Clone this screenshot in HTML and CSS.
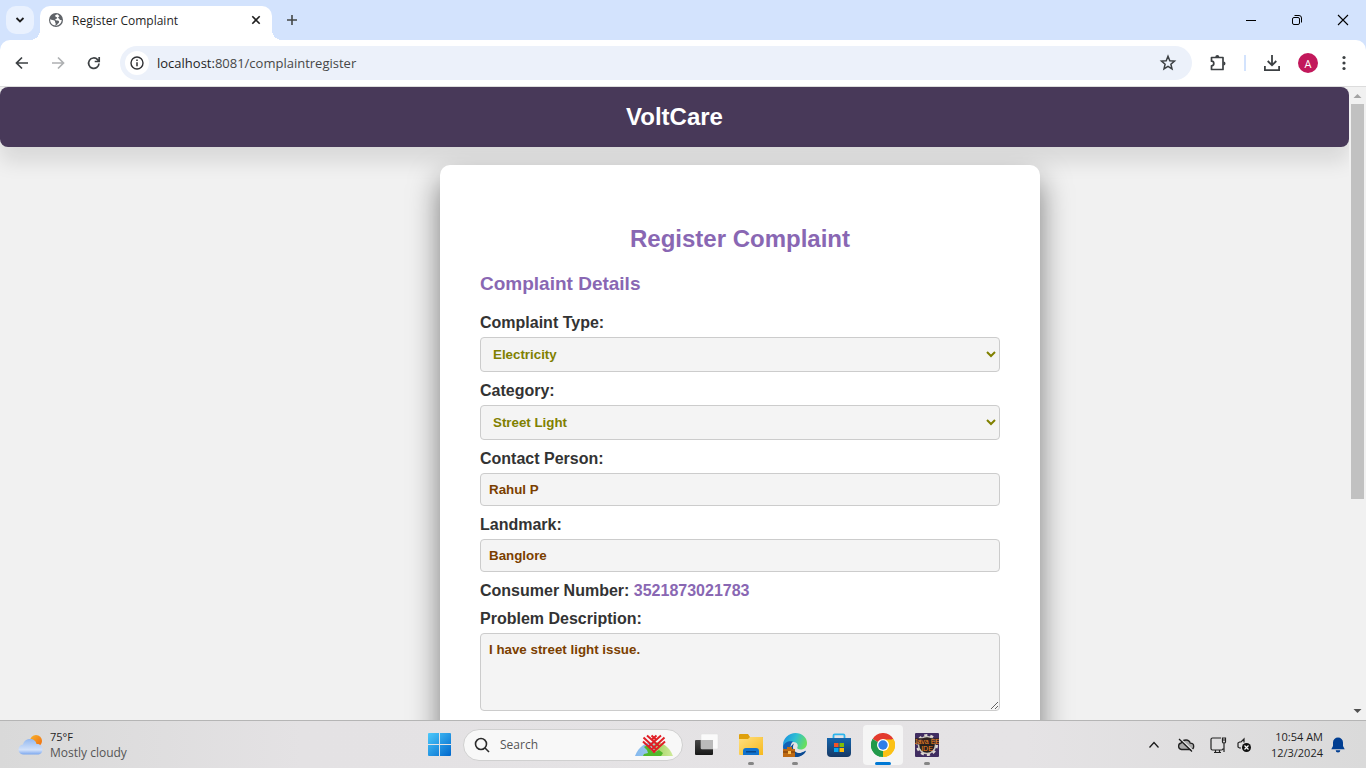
FILE: index.html
```
<!DOCTYPE html>
<html lang="en">
<head>
<meta charset="utf-8">
<title>Register Complaint</title>
<link rel="stylesheet" href="styles.css">
</head>
<body>
<div class="titlebar">
  <button class="tab-search" aria-label="Search tabs"><svg width="12" height="12" viewBox="0 0 12 12"><path d="M2.500 4 6 7.500 9.500 4" fill="none" stroke="#1f1f1f" stroke-width="1.800"/></svg></button>
  <div class="tab">
    <svg class="tab-globe" width="16" height="16" viewBox="0 0 16 16"><circle cx="8" cy="8" r="7" fill="#5f6368"/><path d="M9.500 2.300C7 2.600 6.800 4 7.600 4.700s1.700.3 1.600 1.300-1.700.7-1.900 1.600.9 1 2.300 1 1.700 1 1.400 2-1.500 1-1.900 2.100l-1.400 1C9.500 14 13.600 12 13.700 8c-1.200.3-2-.2-2.300-1s-1.400-.4-1.300-1.400 1.300-.8 1.200-1.700z" fill="#fff"/><path d="M2.200 7.200c1.600.9 3.100.6 4.200 1.300s.3 1.700 1 2.300-.1 1.500.2 2.600C4.500 13.500 1.900 10.800 2.200 7.200z" fill="#fff"/></svg>
    <span class="tab-title">Register Complaint</span>
    <button class="tab-close" aria-label="Close tab"><svg width="10" height="10" viewBox="0 0 10 10"><path d="M1.300 1.300 8.700 8.700M8.700 1.300 1.300 8.700" stroke="#1f1f1f" stroke-width="1.600"/></svg></button>
  </div>
  <button class="new-tab" aria-label="New tab"><svg width="12" height="12" viewBox="0 0 12 12"><path d="M6 1v10M1 6h10" stroke="#444746" stroke-width="1.600"/></svg></button>
  <div class="window-controls">
    <button aria-label="Minimize"><svg width="12" height="12" viewBox="0 0 12 12"><path d="M1 6.500h10" stroke="#000"/></svg></button>
    <button aria-label="Restore"><svg width="12" height="12" viewBox="0 0 12 12" fill="none" stroke="#000"><rect x="1.500" y="3.500" width="7" height="7" rx="1.500"/><path d="M3.500 1.500H8a2.500 2.500 0 0 1 2.500 2.500v4.500"/></svg></button>
    <button aria-label="Close"><svg width="12" height="12" viewBox="0 0 12 12"><path d="M1 1l10 10M11 1 1 11" stroke="#000" stroke-width="1.100"/></svg></button>
  </div>
</div>
<div class="toolbar-wrap">
<div class="toolbar">
  <div class="nav">
    <button aria-label="Back"><svg width="16" height="16" viewBox="0 0 16 16" fill="none" stroke="#3c4043" stroke-width="1.700"><path d="M14 8H3M8 2.500 2.500 8 8 13.500"/></svg></button>
    <button aria-label="Forward"><svg width="16" height="16" viewBox="0 0 16 16" fill="none" stroke="#aeb0b2" stroke-width="1.700"><path d="M2 8h11M8 2.500 13.500 8 8 13.500"/></svg></button>
    <button aria-label="Reload"><svg width="16" height="16" viewBox="0 0 16 16" fill="none" stroke="#3c4043" stroke-width="1.700"><path d="M13 8.500A5.200 5.200 0 1 1 11.600 4.600L13 6M13.200 2v4.500H8.700"/></svg></button>
  </div>
  <div class="omnibox">
    <button class="site-info" aria-label="Site information"><svg width="14" height="14" viewBox="0 0 14 14"><circle cx="7" cy="7" r="6" fill="none" stroke="#303134" stroke-width="1.400"/><path d="M7 6.200v4M7 3.600v1.500" stroke="#303134" stroke-width="1.500"/></svg></button>
    <div class="url" role="textbox" aria-label="Address"><span class="url-host">localhost:</span>8081/complaintregister</div>
    <button class="star" aria-label="Bookmark"><svg width="18" height="18" viewBox="0 0 18 18"><path d="m9 2.300 1.800 4.400 4.700.4-3.600 3.100 1.100 4.600L9 12.300l-4 2.500 1.100-4.600-3.600-3.100 4.700-.4z" fill="none" stroke="#3c4043" stroke-width="1.500"/></svg></button>
  </div>
  <div class="actions">
    <button aria-label="Extensions"><svg width="18" height="18" viewBox="0 0 18 18"><path d="M2.500 3.500H14v12H2.500v-3.700a2.300 2.300 0 0 0 0-4.600z" fill="none" stroke="#3c4043" stroke-width="1.700" stroke-linejoin="round"/><path d="M6.300 3a2 2 0 0 1 4 0zM14.500 7.500a2 2 0 0 1 0 4z" fill="#3c4043"/></svg></button>
    <span class="divider"></span>
    <button aria-label="Downloads"><svg width="18" height="18" viewBox="0 0 18 18" fill="none" stroke="#3c4043" stroke-width="1.800"><path d="M9 1v10M4.700 7 9 11.300 13.300 7M1.900 12v4.100h14.200V12"/></svg></button>
    <button class="avatar" aria-label="Profile">A</button>
    <button class="menu" aria-label="Menu"><svg width="4" height="16" viewBox="0 0 4 16" fill="#3c4043"><circle cx="2" cy="2.500" r="1.600"/><circle cx="2" cy="8" r="1.600"/><circle cx="2" cy="13.500" r="1.600"/></svg></button>
  </div>
</div>
</div>
<div class="viewport">
  <div class="page">
    <header class="site-header"><span class="brand">VoltCare</span></header>
    <main class="main">
      <form class="card">
        <h2>Register Complaint</h2>
        <h3>Complaint Details</h3>
        <label for="type">Complaint Type:</label>
        <select id="type"><option>Electricity</option></select>
        <label for="category">Category:</label>
        <select id="category"><option>Street Light</option></select>
        <label for="contact">Contact Person:</label>
        <input id="contact" type="text" value="Rahul P">
        <label for="landmark">Landmark:</label>
        <input id="landmark" type="text" value="Banglore">
        <p class="consumer">Consumer Number: <span>3521873021783</span></p>
        <label for="problem">Problem Description:</label>
        <textarea id="problem" rows="4" spellcheck="false">I have street light issue.</textarea>
      </form>
    </main>
  </div>
  <div class="scrollbar">
    <svg width="17" height="17" viewBox="0 0 17 17"><path d="M4.500 11 8.500 7l4 4z" fill="#a3a3a3"/></svg>
    <div class="track"><div class="thumb"></div></div>
    <svg width="17" height="17" viewBox="0 0 17 17"><path d="m4.500 6 4 4 4-4z" fill="#505050"/></svg>
  </div>
</div>
<div class="taskbar">
  <button class="weather">
    <svg width="26" height="22" viewBox="0 0 26 22"><defs><linearGradient id="sun" x1="0" y1="0" x2="1" y2="1"><stop offset="0" stop-color="#f7b32b"/><stop offset="1" stop-color="#f0690f"/></linearGradient><linearGradient id="cld" x1="0" y1="0" x2="0" y2="1"><stop offset="0" stop-color="#94b9f0"/><stop offset=".7" stop-color="#d3e2fa"/><stop offset="1" stop-color="#7ba7ee"/></linearGradient></defs><circle cx="18" cy="7" r="6" fill="url(#sun)"/><path d="M6 20.500a5 5 0 0 1-1-10C6 6.500 9 5 12 5c3.500 0 6 2 6.500 5 3.500-.5 6 2 6 5.200 0 3.300-2 5.300-5 5.300z" fill="url(#cld)"/></svg>
    <span class="weather-text"><span class="temp">75°F</span><span class="sky">Mostly cloudy</span></span>
  </button>
  <div class="apps">
    <button class="start" aria-label="Start"><svg width="23" height="23" viewBox="0 0 23 23"><defs><linearGradient id="win" x1="0" y1="0" x2="1" y2="1"><stop offset="0" stop-color="#4cc9fb"/><stop offset="1" stop-color="#0067cc"/></linearGradient></defs><path d="M0 1q0-1 1-1h10v11H0zM12 0h10q1 0 1 1v10H12zM0 12h11v11H1q-1 0-1-1zM12 12h11v10q0 1-1 1H12z" fill="url(#win)"/></svg></button>
    <div class="search">
      <svg width="16" height="16" viewBox="0 0 16 16" fill="none" stroke="#2b2b2b" stroke-width="1.600"><circle cx="7" cy="7" r="5.500"/><path d="m11 11 4 4"/></svg>
      <input type="text" placeholder="Search" aria-label="Search">
      <svg width="40" height="24" viewBox="0 0 40 24"><defs><linearGradient id="hill" x1="0" x2="1"><stop offset="0" stop-color="#84b8ef"/><stop offset=".45" stop-color="#9ccbe8"/><stop offset=".6" stop-color="#a7d568"/><stop offset="1" stop-color="#d0eb9b"/></linearGradient></defs><path d="M1 23C5 13 12 9 20 9s15 4 19 14z" fill="url(#hill)"/><path d="M10 14c3-2 5-2 7 0l-1 2 4 4 5-3 4 3-2 3H9l1-2 4-1-1-3z" fill="#50b92d"/><g stroke="#e01f26" stroke-width="2" fill="none"><path d="M9 8.500 21 19.500M9.500 4.500 23 17M13 2.500 26 14M17.500 2.500 22 6.500M31 8.500 19 19.500M30.500 4.500 17 17M27 2.500 14 14M22.500 2.500 18 6.500"/></g></svg>
    </div>
    <button class="app" aria-label="Task view"><svg width="24" height="24" viewBox="0 0 24 24"><defs><linearGradient id="tv" x1="0" y1="0" x2="0" y2="1"><stop offset="0" stop-color="#484848"/><stop offset="1" stop-color="#171717"/></linearGradient></defs><rect x="0" y="7" width="18" height="15" rx="1" fill="url(#tv)"/><rect x="6" y="1" width="17" height="15" rx="1" fill="#fafafa" stroke="#ddd" stroke-width=".5"/><path d="M6 7h12v9H6z" fill="#bababa"/></svg></button>
    <button class="app running" aria-label="File Explorer"><svg width="24" height="24" viewBox="0 0 24 24"><defs><linearGradient id="fold" x1="0" y1="0" x2="1" y2="1"><stop offset="0" stop-color="#ffe080"/><stop offset="1" stop-color="#f7b91e"/></linearGradient></defs><path d="M0 2q0-1 1-1h8l2 3h12q1 0 1 1v7H0z" fill="#dfa00c"/><path d="M0 6h9l2-2h12q1 0 1 1v17H1q-1 0-1-1z" fill="url(#fold)"/><path d="M4 22v-4q0-3 3-3h10q3 0 3 3v4z" fill="#1173ce"/><path d="M7 18h10v1.500H7z" fill="#07498f"/></svg></button>
    <button class="app running" aria-label="Edge"><svg width="24" height="24" viewBox="0 0 24 24"><defs><linearGradient id="edge" x1="0" y1=".2" x2="1" y2=".5"><stop offset="0" stop-color="#1a8fe0"/><stop offset=".5" stop-color="#2fbfd3"/><stop offset="1" stop-color="#69df5b"/></linearGradient></defs><path d="M0 12C0 5 6 0 12.500 0 19 0 24 4.500 24 10c0 4-2.500 6.500-6.500 6.500-2.500 0-4-1-3-2.500 1-2-.5-5-4-5C5 9 1 12 0 16z" fill="url(#edge)"/><path d="M0 14C1 9 6 7.500 10 8.500c-3.500 3-3 8.500 1 10.500 4 2 8.500 1 12-1.500-2 4-6 6.500-11 6.500C5 24 0 20 0 14z" fill="#1260b4"/><path d="M11 10.500c-3 5 1 10.500 7 9.500l5-2c-2 4-6 6-11 6l-5-5c0-4 1-7 4-8.500z" fill="#0c4a91"/><path d="M4 16v-2h5v2h3v8H0v-8z" fill="#bd6913"/><path d="M0 18.500h12v1H0z" fill="#713606"/><path d="M5 18h3v3H5z" fill="#ffc555"/></svg></button>
    <button class="app" aria-label="Microsoft Store"><svg width="24" height="24" viewBox="0 0 24 24"><defs><linearGradient id="store" x1="0" y1="0" x2="0" y2="1"><stop offset="0" stop-color="#1565ad"/><stop offset="1" stop-color="#173965"/></linearGradient></defs><path d="M6.500 7V2.500q0-1.200 1.200-1.200h8.600q1.200 0 1.200 1.200V7" fill="none" stroke="#2cb5ed" stroke-width="1.800"/><path d="M0 5h24v15q0 4-4 4H4q-4 0-4-4z" fill="url(#store)"/><path d="M7 10h4.500v4H7z" fill="#f35325"/><path d="M12.500 10H17v4h-4.500z" fill="#81bc06"/><path d="M7 15h4.500v4H7z" fill="#05a6f0"/><path d="M12.500 15H17v4h-4.500z" fill="#ffba08"/></svg></button>
    <button class="app running active" aria-label="Chrome"><svg width="24" height="24" viewBox="0 0 24 24"><path d="M12 12 1.600 6A12 12 0 0 1 22.400 6z" fill="#e33b2e"/><path d="M12 12 22.400 6A12 12 0 0 1 12 24z" fill="#fbc116"/><path d="M12 12v12A12 12 0 0 1 1.600 6z" fill="#229a4b"/><path d="M12 6.500h10.700A12 12 0 0 1 12 24l5-9z" fill="#fbc116"/><path d="M1.600 6l5.600 9 5 3-3.500 5.500A12 12 0 0 1 1.600 6z" fill="#229a4b"/><circle cx="12" cy="12" r="6" fill="#fff"/><circle cx="12" cy="12" r="4.700" fill="#2e7de9"/></svg></button>
    <button class="app running" aria-label="Java EE IDE"><svg width="24" height="24" viewBox="0 0 24 24"><rect width="24" height="24" rx="1" fill="#402d61"/><circle cx="12" cy="12" r="9.500" fill="none" stroke="#ded9d3" stroke-width="3" stroke-dasharray="3 2.970"/><circle cx="12" cy="12" r="8.500" fill="#24201f" stroke="#cec8c2" stroke-width="1.500"/><path d="M0 5h24v6.500H0z" fill="#33231f" opacity=".8"/><text x="12" y="11" text-anchor="middle" class="ide-text">Java EE</text><text x="12" y="18" text-anchor="middle" class="ide-text">IDE</text></svg></button>
  </div>
  <div class="tray">
    <button aria-label="Show hidden icons"><svg width="12" height="12" viewBox="0 0 12 12"><path d="m1.500 8.500 4.500-5 4.500 5" fill="none" stroke="#1b1b1b" stroke-width="1.300"/></svg></button>
    <button class="cloud" aria-label="OneDrive"><svg width="18" height="16" viewBox="0 0 18 16"><path d="M4.500 12.500a3.300 3.300 0 0 1-.3-6.500C5 4 6.800 3 9 3s3.700 1.300 4.200 3.200c2.200 0 3.500 1.400 3.500 3.100s-1.400 3.200-3.200 3.200z" fill="#aaa" stroke="#222" stroke-width="1.300"/><path d="m3.500 2 12.500 11.500" stroke="#e4e4e4" stroke-width="1.500"/><path d="m2 2 13 12.500" stroke="#1b1b1b" stroke-width="1.300"/></svg></button>
    <button class="net" aria-label="Network"><svg width="17" height="18" viewBox="0 0 17 18" fill="none" stroke="#222" stroke-width="1.200"><path d="M11 2H2.500Q1 2 1 3.500v9Q1 14 2.500 14h9q1.500 0 1.500-1.500M5.500 14v2.500M9.500 14v2.500M4 16.500h7M12.500 2h3v4q0 1-1.500 1t-1.500-1zM14 7v9M12 4h4"/></svg></button>
    <button class="vol" aria-label="Volume muted"><svg width="16" height="16" viewBox="0 0 16 16"><path d="M5 11H3.500L2 10V6l1.500-1H5l3-3v3.500" fill="none" stroke="#222" stroke-width="1.200"/><circle cx="10.500" cy="10.500" r="4.500" fill="#111"/><path d="m8.500 8.500 4 4m0-4-4 4" stroke="#fff" stroke-width="1.200"/></svg></button>
    <button class="clock"><span>10:54 AM</span><span>12/3/2024</span></button>
    <button aria-label="Notifications"><svg width="14" height="16" viewBox="0 0 14 16"><path d="M7 .5a5 5 0 0 1 5 5V9l1.700 3.200H.3L2 9V5.500a5 5 0 0 1 5-5zM4.700 13.200h4.600a2.300 2.300 0 0 1-4.600 0z" fill="#003e92"/></svg></button>
  </div>
</div>
</body>
</html>
```
FILE: styles.css
```
* { box-sizing: border-box; }
body {
  margin: 0;
  height: 100vh;
  overflow: hidden;
  display: flex;
  flex-direction: column;
  font-family: "Open Sans", "Noto Sans", sans-serif;
  font-size: 12px;
  color: #1f1f1f;
}
button {
  border: 0;
  padding: 0;
  background: none;
  font: inherit;
  color: inherit;
  display: flex;
  align-items: center;
  justify-content: center;
}
svg { display: block; flex: none; }

/* Browser chrome */
.titlebar {
  flex: none;
  height: 40px;
  display: flex;
  align-items: center;
  background: #d3e3fd;
  padding-left: 6px;
}
.tab-search { width: 28px; height: 28px; border-radius: 10px; background: #e9f1fe; }
.tab {
  position: relative;
  align-self: flex-end;
  width: 232px;
  height: 34px;
  margin-left: 6px;
  padding: 0 11px 6px 8px;
  display: flex;
  align-items: center;
  gap: 8px;
  background: #fff;
  border-radius: 10px 10px 0 0;
}
.tab::before, .tab::after {
  content: "";
  position: absolute;
  bottom: 0;
  width: 10px;
  height: 10px;
}
.tab::before { right: 100%; background: radial-gradient(circle at 0 0, transparent 10px, #fff 10px); }
.tab::after { left: 100%; background: radial-gradient(circle at 100% 0, transparent 10px, #fff 10px); }
.tab-title { flex: 1; font-size: 12px; white-space: nowrap; }
.new-tab { width: 28px; height: 28px; margin-left: 6px; }
.window-controls { display: flex; margin-left: auto; }
.window-controls button { width: 46px; height: 40px; }
.toolbar-wrap { flex: none; background: #d3e3fd; }
.toolbar {
  height: 47px;
  display: flex;
  align-items: center;
  background: #fff;
  border-bottom: 1px solid #dcdcdc;
  border-radius: 10px 10px 0 0;
  padding: 0 4px;
}
.nav { display: flex; }
.nav button { width: 36px; height: 34px; }
.omnibox {
  flex: 1;
  height: 34px;
  margin-left: 8px;
  padding: 0 15px 0 5px;
  display: flex;
  align-items: center;
  background: #ecf1fa;
  border-radius: 17px;
}
.site-info { width: 24px; height: 24px; border-radius: 50%; background: #fff; }
.url { flex: 1; margin-left: 8px; font-size: 13px; color: #474747; }
.url-host { color: #1f1f1f; }
.actions { display: flex; align-items: center; padding-left: 8px; }
.actions button { width: 36px; height: 34px; }
.divider { width: 2px; height: 16px; margin: 0 8px; background: #d3e3fd; }
.actions .avatar { width: 20px; height: 20px; margin: 0 8px; border-radius: 50%; background: #c2185b; color: #fff; font-size: 11px; }

/* Web page */
.viewport { flex: 1; min-height: 0; display: flex; background: #f1f1f1; }
.page {
  flex: 1;
  overflow: hidden;
  font-family: Arial, "Liberation Sans", sans-serif;
  font-size: 16px;
  color: #333;
}
.site-header {
  padding: 16px;
  text-align: center;
  background: #483959;
  color: #fff;
  border-radius: 8px;
  box-shadow: 0 15px 20px rgba(0, 0, 0, 0.1);
}
.brand { display: block; font-size: 24px; font-weight: bold; line-height: 28px; }
.main { padding: 18px 0 40px 131px; display: flex; justify-content: center; }
.card {
  width: 600px;
  padding: 40px;
  background: #fff;
  border-radius: 10px;
  box-shadow: 0 15px 30px rgba(0, 0, 0, 0.5);
}
.card h2 { margin: 20px 0; font-size: 24px; line-height: 27px; text-align: center; color: #8967b3; }
.card h3 { margin: 0 0 19px; font-size: 19px; line-height: 23px; color: #8967b3; }
.card label { display: block; margin: 10px 0 5px; font-weight: bold; line-height: 18px; }
.card h3 + label { margin-top: 0; }
.card input, .card select, .card textarea {
  display: block;
  width: 100%;
  padding: 8px;
  border: 1px solid #ccc;
  border-radius: 4px;
  background: #f4f4f4;
  font-family: Arial, "Liberation Sans", sans-serif;
  font-weight: bold;
  color: #7b3f00;
}
.card select { height: 35px; color: #808000; }
.card textarea { resize: vertical; }
.consumer { margin: 10px 0; font-weight: bold; line-height: 18px; }
.consumer span { color: #8967b3; }

.scrollbar { flex: none; width: 17px; display: flex; flex-direction: column; background: #f1f1f1; }
.track { flex: 1; padding: 0 2px; }
.thumb { height: 66%; background: #c1c1c1; }

/* Taskbar */
.taskbar {
  flex: none;
  height: 48px;
  display: grid;
  grid-template-columns: 1fr auto 1fr;
  align-items: center;
  border-top: 1px solid #b5b5b5;
  background: linear-gradient(90deg, #d9d9d9, #e4e2e4 22%, #e5e3e5 75%, #dadada);
}
.weather { justify-self: start; padding-left: 18px; gap: 6px; }
.weather-text { display: flex; flex-direction: column; text-align: left; line-height: 16px; }
.temp { font-size: 11px; }
.sky { font-size: 12px; color: #555; }
.apps { display: flex; align-items: center; height: 47px; }
.start { width: 44px; height: 40px; }
.search {
  width: 220px;
  height: 32px;
  margin: 0 2px;
  padding: 0 8px 0 10px;
  display: flex;
  align-items: center;
  gap: 10px;
  border: 1px solid #d0d0d0;
  border-radius: 16px;
  background: #f8f8f8;
}
.search input { flex: 1; min-width: 0; border: 0; padding: 0; background: none; font: inherit; outline: 0; }
.search input::placeholder { color: #555; opacity: 1; }
.app { position: relative; width: 40px; height: 40px; margin: 0 2px; border-radius: 4px; }
.active { background: #f5f5f5; }
.running::after {
  content: "";
  position: absolute;
  bottom: 0;
  left: 17px;
  width: 6px;
  height: 3px;
  border-radius: 2px;
  background: #858585;
}
.active::after { left: 12px; width: 16px; background: #0078d4; }
.ide-text { font-family: "Liberation Sans", sans-serif; font-size: 7px; fill: #f5851f; }
.tray { justify-self: end; display: flex; align-items: center; padding-right: 21px; }
.cloud { margin-left: 17px; }
.net { margin-left: 15px; }
.vol { margin-left: 9px; }
.clock { flex-direction: column; align-items: flex-end; margin: 0 8px 0 19px; font-size: 11px; line-height: 16px; }
```
